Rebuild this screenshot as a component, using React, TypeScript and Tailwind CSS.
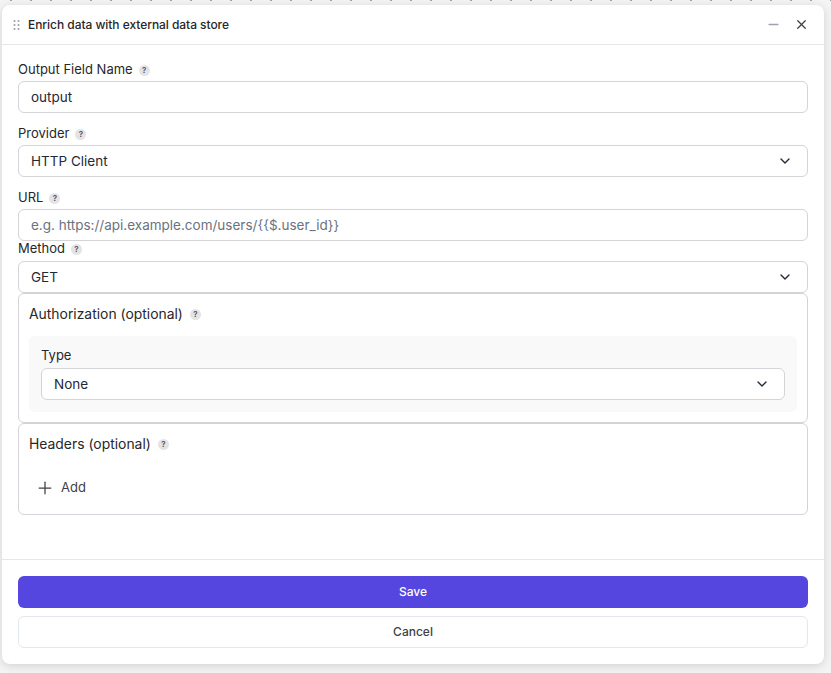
import { ChevronDown, Minus, Plus, X } from "lucide-react";

function Help({ wide }: { wide?: boolean }) {
  return (
    <span
      className={`${wide ? "ml-[7px]" : "ml-[6px]"} inline-flex h-[11px] w-[11px] items-center justify-center rounded-full bg-[#e4e4e7] text-[8px] font-semibold leading-none text-[#52525b]`}
    >
      ?
    </span>
  );
}

function Label({ text }: { text: string }) {
  return (
    <div className="flex h-[22px] items-center text-[13px] text-[#27272a]">
      {text}
      <Help />
    </div>
  );
}

function Field({ value, placeholder, select }: { value?: string; placeholder?: string; select?: boolean }) {
  return (
    <div className="flex h-8 items-center justify-between rounded-md border border-[#d4d4d8] bg-white pl-3 pr-[14px] text-[13.5px]">
      <span className={value ? "text-[#1f2937]" : "text-[#6b7280]"}>{value || placeholder}</span>
      {select ? <ChevronDown size={16} className="text-[#1f2937]" /> : null}
    </div>
  );
}

export default function App() {
  return (
    <div className="h-[673px] w-[831px] bg-[#f4f4f5] bg-[radial-gradient(circle,#a1a1aa_1px,transparent_1px)] bg-size-[20px_20px] bg-position-[1px_-10px] bg-repeat-x pt-[5px] pl-[2px] font-['Inter',sans-serif]">
      <div className="flex h-[659px] w-[822px] flex-col rounded-lg bg-white shadow-[0_2px_10px_rgba(0,0,0,0.14)]">
        <div className="flex h-10 items-center border-b border-[#e5e7eb] pl-[10px] pr-[15px]">
          <svg width="10" height="12" viewBox="0 0 10 12" className="mr-[6px] text-[#9ca3af]" fill="currentColor">
            <circle cx="2.5" cy="2" r="1.1" />
            <circle cx="6.5" cy="2" r="1.1" />
            <circle cx="2.5" cy="6" r="1.1" />
            <circle cx="6.5" cy="6" r="1.1" />
            <circle cx="2.5" cy="10" r="1.1" />
            <circle cx="6.5" cy="10" r="1.1" />
          </svg>
          <span className="flex-1 text-xs font-[450] tracking-[-0.05px] text-[#27272a]">Enrich data with external data store</span>
          <Minus size={15} strokeWidth={2.2} className="mr-[13px] text-[#9ca3af]" />
          <X size={15} className="text-[#3f3f46]" />
        </div>

        <div className="flex flex-1 flex-col px-4 pt-[14px]">
          <Label text="Output Field Name" />
          <Field value="output" />
          <div className="mt-[10px]"><Label text="Provider" /></div>
          <Field value="HTTP Client" select />
          <div className="mt-[10px]"><Label text="URL" /></div>
          <Field placeholder="e.g. https://api.example.com/users/{{$.user_id}}" />
          <div className="flex h-5 items-center pb-1 text-[13px] text-[#27272a]">
            Method
            <Help />
          </div>
          <Field value="GET" select />

          <div className="h-[130px] rounded-md border border-[#d4d4d8] px-[10px] pt-[9px]">
            <div className="flex h-[22px] items-center text-[13.9px] text-[#27272a]">
              Authorization (optional)
              <Help wide />
            </div>
            <div className="mt-[11px] rounded-md bg-[#f9f9fa] px-3 pb-3 pt-[10px]">
              <div className="flex h-[22px] items-center pb-[2px] text-[13px] text-[#27272a]">Type</div>
              <Field value="None" select />
            </div>
          </div>

          <div className="h-[92px] rounded-md border border-[#d4d4d8] px-[10px] pt-[9px]">
            <div className="flex h-[22px] items-center text-[13.9px] text-[#27272a]">
              Headers (optional)
              <Help wide />
            </div>
            <div className="mt-[21px] flex h-6 items-center pl-[6px] text-[13px] text-[#3f3f46]">
              <Plus size={20} strokeWidth={1.5} className="mr-[6px]" />
              Add
            </div>
          </div>
        </div>

        <div className="flex h-[105px] flex-col gap-2 border-t border-[#e5e7eb] px-4 pt-4">
          <button className="h-8 rounded-md bg-[#5646e0] text-xs font-[450] text-white">Save</button>
          <button className="h-8 rounded-md border border-[#e5e7ef] bg-white text-xs font-[450] text-[#3f3f46]">Cancel</button>
        </div>
      </div>
    </div>
  );
}
